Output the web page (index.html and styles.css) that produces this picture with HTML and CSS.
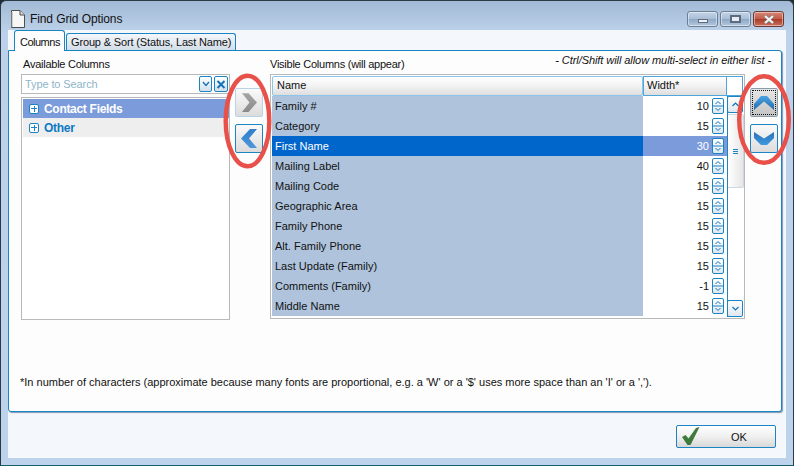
FILE: index.html
```html
<!DOCTYPE html>
<html lang="en">
<head>
<meta charset="utf-8">
<title>Find Grid Options</title>
<link rel="stylesheet" href="styles.css">
</head>
<body>
<svg class="defs" width="0" height="0"><symbol id="spin-arrows" viewBox="0 0 10 14"><path d="M2.500 5 5 2.500 7.500 5M2.500 9 5 11.500 7.500 9" fill="none" stroke="#1273b8" stroke-width="1"/><path d="M0 7H10" stroke="#1a84c4"/></symbol></svg>
<div class="window">
  <header class="titlebar">
    <svg class="doc-icon" width="16" height="18" viewBox="0 0 16 18"><path d="M1.5 .5H10L14.5 5V17.5H1.5Z" fill="#f6f6f4" stroke="#4d4d4d"/><path d="M10 .5V5H14.5" fill="#d8d8d8" stroke="#4d4d4d"/><path d="M2 2V17" stroke="#a8a8a8" stroke-width="1"/></svg>
    <span class="title">Find Grid Options</span>
    <div class="caption">
      <span class="cap cap-min"><i></i></span>
      <span class="cap cap-max"><i></i></span>
      <span class="cap cap-close"><svg width="12" height="9" viewBox="0 0 12 9"><path d="M2 1 10 8M10 1 2 8" stroke="#777" stroke-width="3.400"/><path d="M2 1 10 8M10 1 2 8" stroke="#f4f4f4" stroke-width="2.200"/></svg></span>
    </div>
  </header>
  <div class="client">
    <nav class="tabs">
      <span class="tab active">Columns</span>
      <span class="tab tab-group">Group &amp; Sort (Status, Last Name)</span>
    </nav>
    <section class="panel">
      <div class="labels">
        <span class="label-left">Available Columns</span>
        <span class="label-right">Visible Columns (will appear)</span>
        <em class="hint">- Ctrl/Shift will allow multi-select in either list -</em>
      </div>
      <div class="main">
        <div class="available">
          <div class="search">
            <span class="placeholder">Type to Search</span>
            <span class="sbtn"><svg width="8" height="6" viewBox="0 0 8 6"><path d="M1 1 4 4.500 7 1" fill="none" stroke="#1273b8" stroke-width="1.300"/></svg></span>
            <span class="sbtn"><svg width="10" height="9" viewBox="0 0 10 9"><path d="M1.5 1 8.500 8M8.500 1 1.500 8" stroke="#1273b8" stroke-width="2"/></svg></span>
          </div>
          <div class="tree">
            <div class="node selected"><span class="plus"></span>Contact Fields</div>
            <div class="node other"><span class="plus"></span>Other</div>
          </div>
        </div>
        <div class="movers">
          <span class="mover"><svg width="15" height="19" viewBox="0 0 16 20"><defs><linearGradient id="grayc" x1="0" y1="0" x2="0" y2="1"><stop offset="0" stop-color="#a6a6a6"/><stop offset="1" stop-color="#8a8a8a"/></linearGradient></defs><path d="M0 0H7L16 10 7 20H0L8 10Z" fill="url(#grayc)"/></svg></span>
          <span class="mover mover-live"><svg width="16" height="19" viewBox="0 0 16 19"><defs><linearGradient id="bluec" x1="0" y1="0" x2="0" y2="1"><stop offset="0" stop-color="#2f7fca"/><stop offset="1" stop-color="#4f97da"/></linearGradient></defs><path d="M16 0H9L0 9.500 9 19H16L8 9.500Z" fill="url(#bluec)"/></svg></span>
        </div>
        <div class="grid">
          <div class="grid-head">
            <span class="th th-name">Name</span>
            <span class="th th-width">Width*</span>
            <span class="th th-corner"></span>
          </div>
          <div class="grid-body">
            <div class="rows">
              <div class="row"><span class="cell-name">Family #</span><span class="cell-width">10</span><svg class="spin"><use href="#spin-arrows"/></svg></div>
              <div class="row"><span class="cell-name">Category</span><span class="cell-width">15</span><svg class="spin"><use href="#spin-arrows"/></svg></div>
              <div class="row current"><span class="cell-name">First Name</span><span class="cell-width">30</span><svg class="spin"><use href="#spin-arrows"/></svg></div>
              <div class="row"><span class="cell-name">Mailing Label</span><span class="cell-width">40</span><svg class="spin"><use href="#spin-arrows"/></svg></div>
              <div class="row"><span class="cell-name">Mailing Code</span><span class="cell-width">15</span><svg class="spin"><use href="#spin-arrows"/></svg></div>
              <div class="row"><span class="cell-name">Geographic Area</span><span class="cell-width">15</span><svg class="spin"><use href="#spin-arrows"/></svg></div>
              <div class="row"><span class="cell-name">Family Phone</span><span class="cell-width">15</span><svg class="spin"><use href="#spin-arrows"/></svg></div>
              <div class="row"><span class="cell-name">Alt. Family Phone</span><span class="cell-width">15</span><svg class="spin"><use href="#spin-arrows"/></svg></div>
              <div class="row"><span class="cell-name">Last Update (Family)</span><span class="cell-width">15</span><svg class="spin"><use href="#spin-arrows"/></svg></div>
              <div class="row"><span class="cell-name">Comments (Family)</span><span class="cell-width">-1</span><svg class="spin"><use href="#spin-arrows"/></svg></div>
              <div class="row"><span class="cell-name">Middle Name</span><span class="cell-width">15</span><svg class="spin"><use href="#spin-arrows"/></svg></div>
            </div>
            <div class="scrollbar">
              <span class="sb-btn"><svg width="7" height="5" viewBox="0 0 7 5"><path d="M.5 4 3.500 1 6.500 4" fill="none" stroke="#1273b8" stroke-width="1.200"/></svg></span>
              <span class="sb-thumb"><i></i><i></i><i></i></span>
              <span class="sb-space"></span>
              <span class="sb-btn"><svg width="7" height="5" viewBox="0 0 7 5"><path d="M.5 1 3.500 4 6.500 1" fill="none" stroke="#1273b8" stroke-width="1.200"/></svg></span>
            </div>
          </div>
        </div>
        <div class="movers movers-right">
          <span class="mover focused"><svg width="20" height="14" viewBox="0 0 20 14"><defs><linearGradient id="upc" x1="0" y1="0" x2="0" y2="1"><stop offset="0" stop-color="#44a2e4"/><stop offset="1" stop-color="#2a6cab"/></linearGradient></defs><path d="M7 0H13L20 8V14L10 5.500 0 14V8Z" fill="url(#upc)"/></svg></span>
          <span class="mover mover-live"><svg width="20" height="13" viewBox="0 0 20 13"><defs><linearGradient id="downc" x1="0" y1="0" x2="0" y2="1"><stop offset="0" stop-color="#2a72b8"/><stop offset="1" stop-color="#3f9ae0"/></linearGradient></defs><path d="M0 0 10 6.500 20 0V6L13 13H7L0 6Z" fill="url(#downc)"/></svg></span>
        </div>
      </div>
      <p class="note">*In number of characters (approximate because many fonts are proportional, e.g. a 'W' or a '$' uses more space than an 'I' or a ',').</p>
    </section>
    <footer class="footer">
      <button class="ok" type="button">
        <svg width="19" height="19" viewBox="0 0 19 19"><path d="M0 10 3.500 8 6.500 11.500 14 1 17.500 0 8.500 18H5.500Z" fill="#3f7a3c"/></svg>
        <span>OK</span>
      </button>
    </footer>
  </div>
  <svg class="ring ring-left" width="50" height="97" viewBox="0 0 50 97"><ellipse cx="25.500" cy="49" rx="21.800" ry="45.300" fill="none" stroke="#e8504a" stroke-width="4.400"/></svg>
  <svg class="ring ring-right" width="56" height="93" viewBox="0 0 56 93"><ellipse cx="28" cy="46.500" rx="24.800" ry="43.300" fill="none" stroke="#e8504a" stroke-width="4.400"/></svg>
</div>
</body>
</html>
```

FILE: styles.css
```css
* { box-sizing: border-box; }
html, body { margin: 0; padding: 0; background: #1d2b33; }
body { width: 794px; height: 466px; overflow: hidden; font-family: "Liberation Sans", sans-serif; font-size: 11px; color: #111; }
.defs { position: absolute; }

.window { position: relative; width: 794px; height: 466px; display: flex; flex-direction: column; border: 1px solid #2b3a44; border-bottom-color: #145f6e; border-radius: 6px 6px 0 0; padding: 0 7px 7px; background: linear-gradient(#a2bad6 0, #bdd2ea 32px, #bcd3eb 100%); }

.titlebar { height: 29px; display: flex; align-items: center; flex: none; padding: 0 0 0 2px; }
.doc-icon { margin: 6px 4px 0 0; flex: none; }
.title { font-size: 12px; padding-top: 7px; color: #111; letter-spacing: -.1px; }
.caption { margin-left: auto; display: flex; gap: 2px; align-self: flex-start; margin-top: 10px; margin-right: 2px; }
.cap { width: 31px; height: 16px; border: 1px solid #6d7f93; border-radius: 3px; background: linear-gradient(#c4d4e6, #a7bdd6 50%, #8ea8c6 52%, #b4c8de); display: flex; align-items: center; justify-content: center; box-shadow: inset 0 0 0 1px rgba(255,255,255,.45); }
.cap-min i { width: 10px; height: 4px; margin-top: 4px; background: #eef2f6; border: 1px solid #5c6b7d; }
.cap-max i { width: 11px; height: 8px; border: 2px solid #5c6b7d; background: #e8edf3; }
.cap-close { background: linear-gradient(#d68877, #c25a48 50%, #ab3a28 52%, #c8705c); border-color: #6b3a35; }

.client { flex: 1; display: flex; flex-direction: column; background: #f4f7fc; min-height: 0; }
.tabs { height: 20px; display: flex; align-items: flex-end; padding-left: 6px; gap: 1px; flex: none; }
.tab { height: 17px; padding: 0 4px; border: 1px solid #1a84c4; border-bottom: 0; border-radius: 3px 3px 0 0; background: linear-gradient(#f4f7fb, #d3dde8); line-height: 16px; white-space: nowrap; }
.tab-group { letter-spacing: -.15px; }
.tab.active { height: 21px; width: 51px; padding: 3px 0 0 5px; background: #fdfdfd; position: relative; top: 1px; z-index: 1; letter-spacing: -.5px; }

.panel { width: 774px; height: 362px; flex: none; background: #fdfdfd; border: 1px solid #1a84c4; border-radius: 0 3px 3px 3px; box-shadow: 1px 1px 1px #7f98b3; padding: 0 0 0 12px; display: flex; flex-direction: column; }
.labels { height: 23px; display: flex; align-items: flex-end; flex: none; position: relative; }
.label-left { width: 249px; padding-left: 2px; line-height: 18px; height: 19px; letter-spacing: -.25px; }
.label-right { line-height: 18px; height: 19px; letter-spacing: -.25px; }
.hint { margin-left: auto; margin-right: 10px; line-height: 18px; height: 23px; white-space: nowrap; letter-spacing: -.07px; }

.main { display: flex; height: 246px; flex: none; }
.available { width: 209px; flex: none; display: flex; flex-direction: column; gap: 3px; }
.search { height: 20px; border: 1px solid #b9b9b9; display: flex; align-items: center; gap: 2px; padding-right: 1px; flex: none; background: #fff; }
.placeholder { flex: 1; padding-left: 3px; color: #8fb4c9; letter-spacing: -.1px; }
.sbtn { width: 13px; height: 16px; border: 1px solid #1a84c4; border-radius: 2px; background: linear-gradient(#fff, #d4e0ea); display: flex; align-items: center; justify-content: center; }
.sbtn:last-child { width: 14px; }
.tree { flex: none; height: 223px; border: 1px solid #b9b9b9; background: #fff; padding: 1px 0 0 1px; }
.node { height: 19px; display: flex; align-items: center; color: #0d79c4; font-weight: bold; font-size: 12px; padding-left: 6px; gap: 5px; letter-spacing: -.3px; }
.node.selected { background: #7b9bdb; color: #fff; }
.node.other { background: #eeeeee; }
.plus { width: 10px; height: 10px; border: 1px solid #1a84c4; border-radius: 2px; background: linear-gradient(#1a84c4, #1a84c4) center/6px 1px no-repeat, linear-gradient(#1a84c4, #1a84c4) center/1px 6px no-repeat, #fff; flex: none; }

.movers { width: 40px; flex: none; display: flex; flex-direction: column; gap: 7px; padding: 14px 0 0 5px; }
.mover { width: 28px; height: 29px; border: 1px solid #b9d3e6; border-radius: 2px; background: linear-gradient(#fafafa, #dcdcdc); display: flex; align-items: center; justify-content: center; }
.mover-live { border-color: #1a84c4; }
.movers-right { width: 36px; padding-left: 5px; }
.mover.focused { border-color: #8a9caa; background: linear-gradient(#e6e6e6, #c4c4c4); outline: 1px dotted #111; outline-offset: -3px; }

.grid { width: 475px; flex: none; border: 1px solid #b9b9b9; padding: 1px; height: 245px; background: #fff; display: flex; flex-direction: column; }
.grid-head { display: flex; height: 20px; flex: none; }
.th { border: 1px solid #4fa6dc; background: linear-gradient(#fff, #f2f2f2 50%, #dedede); line-height: 17px; padding-left: 4px; }
.th-name { width: 371px; border-radius: 2px; border-color: #8cc5ea; }
.th-width { width: 84px; padding-left: 3px; }
.th-corner { width: 16px; background: #fff; border-left: 0; }
.grid-body { display: flex; flex: 1; min-height: 0; }
.rows { width: 455px; flex: none; }
.row { height: 20px; display: flex; align-items: center; }
.cell-name { width: 371px; height: 20px; background: #afc4dc; padding-left: 3px; line-height: 20px; white-space: nowrap; }
.cell-width { width: 68px; text-align: right; padding-right: 2px; line-height: 20px; }
.spin { width: 12px; height: 16px; margin-left: 1px; border: 1px solid #1a84c4; border-radius: 2px; background: linear-gradient(#fff, #dfe8f0); }
.row.current { background: #7b9bdb; }
.row.current .cell-name { background: #0066cc; color: #fff; }
.row.current .cell-width { color: #fff; }

.scrollbar { width: 17px; flex: none; display: flex; flex-direction: column; border-left: 1px solid #1a84c4; height: 221px; }
.sb-btn { height: 17px; width: 16px; flex: none; border: 1px solid #1a84c4; border-radius: 2px; margin-left: -1px; background: linear-gradient(#fff, #dfe8f0); display: flex; align-items: center; justify-content: center; }
.sb-thumb { height: 74px; margin-top: 1px; border: 1px solid #cfd8e2; border-left: 0; border-radius: 0 2px 2px 0; background: linear-gradient(90deg, #fff, #e6e6e6); flex: none; display: flex; flex-direction: column; align-items: center; justify-content: center; gap: 1px; }
.sb-thumb i { width: 5px; height: 1px; background: #1a84c4; }
.sb-space { flex: 1; background: #fff; }

.note { margin: 55px 0 0 -1px; line-height: 14px; white-space: nowrap; }

.footer { flex: 1; display: flex; justify-content: flex-end; padding: 13px 10px 0 0; }
.ok { width: 100px; height: 23px; padding: 0 0 0 5px; font: inherit; color: #111; border: 1px solid #1a84c4; border-radius: 2px; background: linear-gradient(#fff, #f0f0f0 50%, #d8d8d8); display: flex; align-items: center; }
.ok span { margin-left: 30px; }

.ring { position: absolute; }
.ring-left { left: 221px; top: 71px; }
.ring-right { left: 735px; top: 72px; }
```
